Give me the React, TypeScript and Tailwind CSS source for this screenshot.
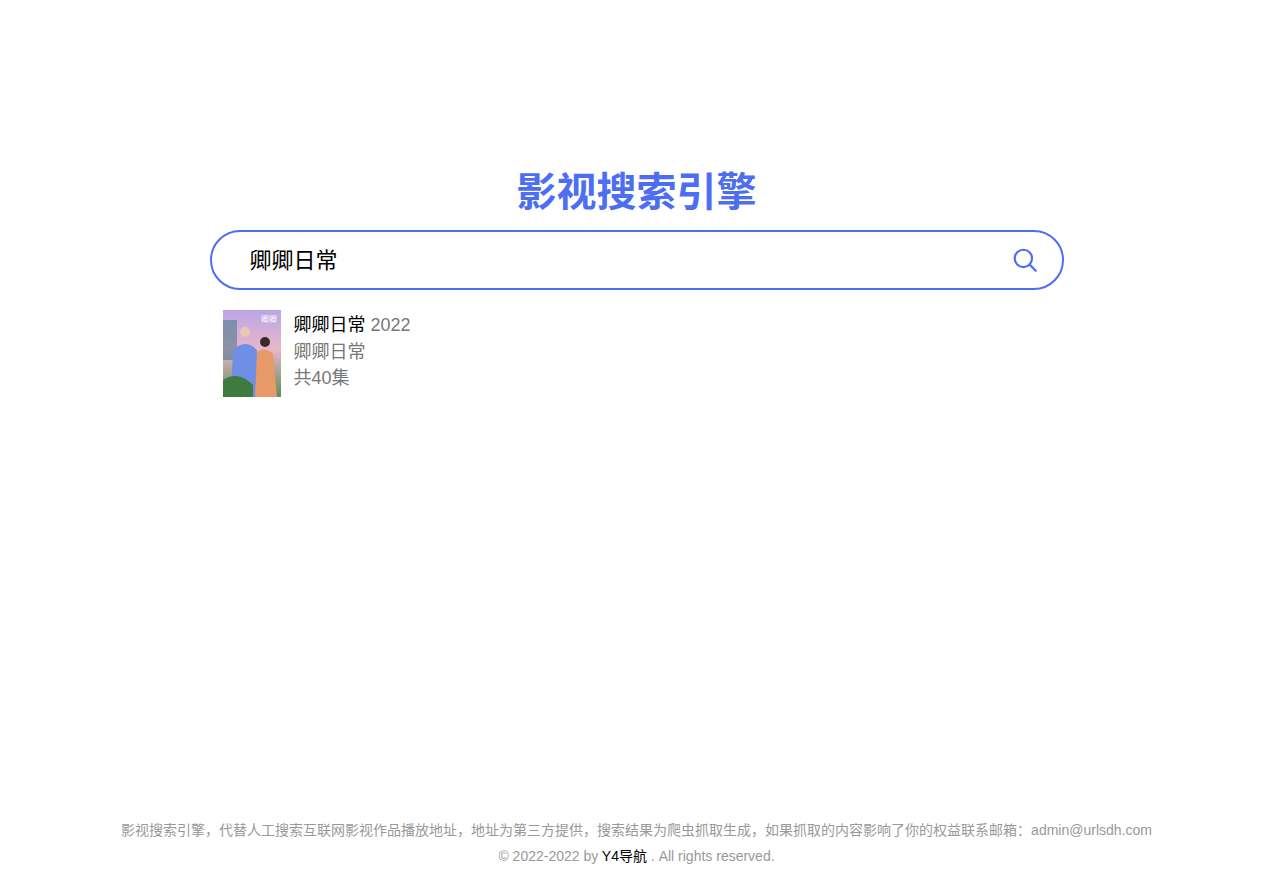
export default function App() {
  const f = { fontFamily: '"Liberation Sans", "Noto Sans CJK SC", sans-serif' };
  return (
    <div style={f} className="min-h-screen flex flex-col bg-white">
      <div className="flex-1 flex flex-col items-center pt-[166px]">
        <h1 className="text-[40px] leading-[52px] font-bold text-[#4e6ef2]">影视搜索引擎</h1>
        <div className="mt-[12px] w-[854px] h-[60px] rounded-full border-2 border-[#4e6ef2] flex items-center pl-[38px] pr-[24px]">
          <span className="flex-1 text-[22px] text-black">卿卿日常</span>
          <svg width="26" height="26" viewBox="0 0 24 24" fill="none" stroke="#4e6ef2" strokeWidth="2" strokeLinecap="round">
            <circle cx="10.5" cy="10.5" r="8" />
            <path d="M16.5 16.5 22 22" />
          </svg>
        </div>
        <div className="w-[854px] mt-[20px] pl-[13px] flex gap-[13px]">
          <svg width="58" height="87" viewBox="0 0 58 87" className="shrink-0">
            <defs>
              <linearGradient id="sky" x1="0" y1="0" x2="0" y2="1">
                <stop offset="0" stopColor="#b9a6e6" />
                <stop offset="0.45" stopColor="#e8b7c8" />
                <stop offset="1" stopColor="#5f8d5a" />
              </linearGradient>
            </defs>
            <rect width="58" height="87" fill="url(#sky)" />
            <rect x="0" y="10" width="14" height="40" fill="#4c7a8a" opacity="0.6" />
            <circle cx="22" cy="22" r="5" fill="#e9c9b5" />
            <path d="M8 87 L10 40 Q22 28 34 40 L34 87 Z" fill="#6f8fe6" />
            <circle cx="42" cy="32" r="5" fill="#3a2a2a" />
            <path d="M32 87 L34 42 Q42 36 50 44 L54 87 Z" fill="#e8996a" />
            <path d="M0 70 Q15 60 30 75 L30 87 L0 87 Z" fill="#3f7a3f" />
            <text x="38" y="12" fontSize="8" fill="#fff">卿卿</text>
          </svg>
          <div className="flex flex-col text-[18px] leading-[27px] pt-[2px]">
            <div><span className="text-black">卿卿日常</span> <span className="text-[#777]">2022</span></div>
            <div className="text-[#777]">卿卿日常</div>
            <div className="text-[#777] -mt-[1px]">共40集</div>
          </div>
        </div>
      </div>
      <footer className="text-center text-[14px] text-[#999] leading-[26px] pb-[5px]">
        <div>影视搜索引擎，代替人工搜索互联网影视作品播放地址，地址为第三方提供，搜索结果为爬虫抓取生成，如果抓取的内容影响了你的权益联系邮箱：admin@urlsdh.com</div>
        <div>© 2022-2022 by <span className="text-black">Y4导航</span> . All rights reserved.</div>
      </footer>
    </div>
  );
}
